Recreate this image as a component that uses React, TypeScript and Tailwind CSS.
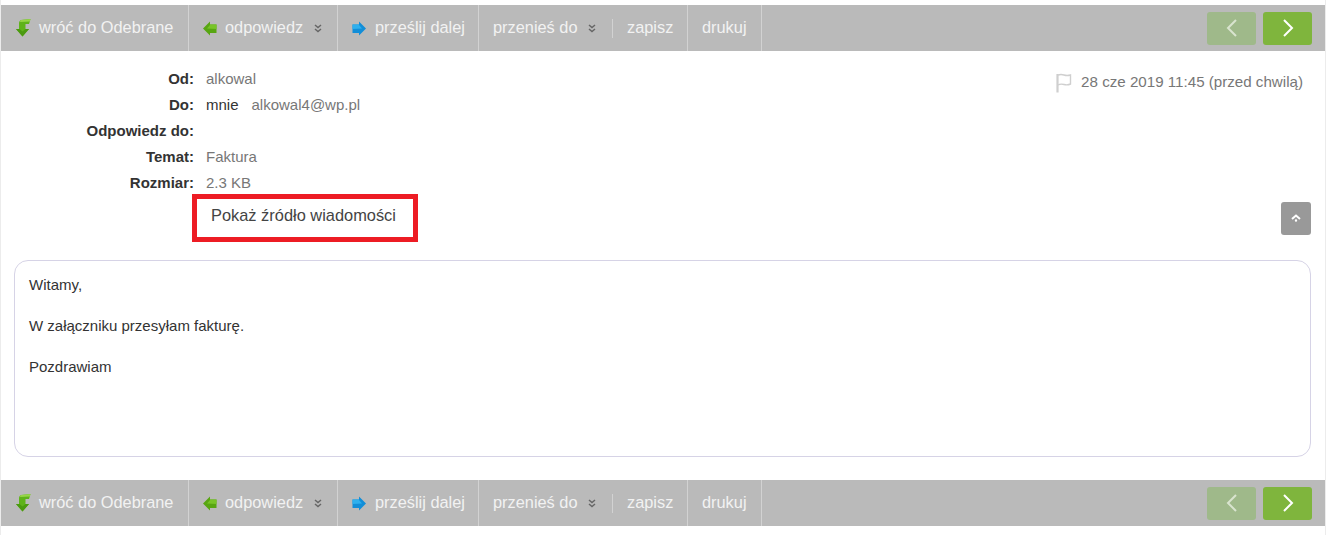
import React from 'react';

const BackIcon = () => (
  <svg width="16" height="18" viewBox="0 0 16 18" className="shrink-0">
    <path d="M6 1 L15.5 0 L14 5 H10.5 V10 H14 L7.5 17.5 L1 10 H4 V4 Q4 2 6 1 Z" fill="#5fb31a" />
    <path d="M7.5 17.5 L1 10 H4.5 L7.5 12.5 L10.5 10 H14 Z" fill="#4b9a10" />
    <path d="M6 1 L15.5 0 L14.8 2.5 L5 3 Q5 1.6 6 1 Z" fill="#96d648" />
  </svg>
);

const ReplyIcon = () => (
  <svg width="14" height="15" viewBox="0 0 14 15" className="shrink-0">
    <path d="M7 0.5 V3.5 H13.5 V12 H7 V14.5 L0 7.5 Z" fill="#58a612" />
    <path d="M7 3.5 H13.5 V8 L4 7.5 L7 4 Z" fill="#78c428" />
  </svg>
);

const ForwardIcon = () => (
  <svg width="14" height="15" viewBox="0 0 14 15" className="shrink-0">
    <path d="M7 0.5 V3.5 H0.5 V12 H7 V14.5 L14 7.5 Z" fill="#128ed8" />
    <path d="M7 3.5 H0.5 V8 L10 7.5 L7 4 Z" fill="#2eb0ee" />
  </svg>
);

const Chevrons = () => (
  <svg width="8" height="9" viewBox="0 0 8 9" fill="none" stroke="#666666" strokeWidth="1.5" className="shrink-0">
    <path d="M1 1 L4 3.5 L7 1" />
    <path d="M1 5 L4 7.5 L7 5" />
  </svg>
);

const Item = ({ label, icon, menu, width, textGap = 'mr-[8px]', pad = 'pl-[14px]' }: { label: string; icon?: React.ReactNode; menu?: boolean; width: string; textGap?: string; pad?: string }) => (
  <div className={`flex h-full items-center border-r border-[#d2d2d2] ${pad} ${width}`}>
    {icon && <span className={`${textGap} flex w-[15px] justify-center`}>{icon}</span>}
    <span className="-mt-[2px]">{label}</span>
    {menu && <span className="ml-[11px] flex"><Chevrons /></span>}
  </div>
);

const Toolbar = () => (
  <div className="flex h-[46px] items-center justify-between bg-[#bababa] pr-[13px] text-[16.35px] text-[#f2f2f2]">
    <div className="flex h-full items-center">
      <Item label="wróć do Odebrane" icon={<BackIcon />} textGap="mr-[9px]" width="w-[188px]" />
      <Item label="odpowiedz" icon={<ReplyIcon />} pad="pl-[13px]" menu width="w-[149px]" />
      <Item label="prześlij dalej" icon={<ForwardIcon />} pad="pl-[13px]" textGap="mr-[9px]" width="w-[141px]" />
      <div className="flex h-full w-[134px] items-center pl-[14px]">
        <span className="-mt-[2px]">przenieś do</span>
        <span className="ml-[10px] flex"><Chevrons /></span>
        <span className="ml-auto h-[19px] w-px bg-[#d2d2d2]" />
      </div>
      <Item label="zapisz" pad="pl-[14px]" width="w-[75px]" />
      <Item label="drukuj" width="w-[74px]" />
    </div>
    <div className="flex gap-[7px]">
      <button className="flex h-[33px] w-[49px] items-center justify-center rounded-[3px] bg-[#9fb98a]">
        <svg width="14" height="20" viewBox="0 0 14 20" fill="none" stroke="#d9e4cf" strokeWidth="2">
          <path d="M11 2 L3 10 L11 18" />
        </svg>
      </button>
      <button className="flex h-[33px] w-[49px] items-center justify-center rounded-[3px] bg-[#7fb53d]">
        <svg width="14" height="20" viewBox="0 0 14 20" fill="none" stroke="#ffffff" strokeWidth="2">
          <path d="M3 2 L11 10 L3 18" />
        </svg>
      </button>
    </div>
  </div>
);

const Row = ({ label, children }: { label: string; children?: React.ReactNode }) => (
  <div className="flex h-[26px] items-center">
    <div className="w-[193px] text-right font-bold text-[#333333]">{label}</div>
    <div className="ml-[12px] flex text-[#777777]">{children}</div>
  </div>
);

export default function App() {
  return (
    <div className="h-[535px] overflow-hidden border-x border-[#ececec] bg-white pt-[5px] font-['Liberation_Sans',Arial,sans-serif] text-[15px]">
      <Toolbar />

      <div className="relative pt-[15px]">
        <Row label="Od:">alkowal</Row>
        <Row label="Do:">
          <span className="mr-[13px] text-[#333333]">mnie</span>
          alkowal4@wp.pl
        </Row>
        <Row label="Odpowiedz do:" />
        <Row label="Temat:">Faktura</Row>
        <Row label="Rozmiar:">2.3 KB</Row>

        {/* flag + date */}
        <div className="absolute top-[20px] right-[22px] flex items-center text-[15.15px] text-[#777777]">
          <svg width="16" height="20" viewBox="0 0 16 20" fill="none" stroke="#cfcfcf" strokeWidth="1.4" className="mt-[2px] mr-[9px]">
            <path d="M1.5 1 V19.5" strokeWidth="2.2" />
            <path d="M2 2 Q5 1 8 2 T14.5 2 V11 Q11.5 12.5 8 11.5 T2 12" />
          </svg>
          <span>28 cze 2019 11:45 (przed chwilą)</span>
        </div>
      </div>

      <div className="-mt-[2px] flex h-[48px] items-center justify-between pr-[14px]">
        <div className="ml-[191px] h-[48px] w-[226px] border-[5px] border-[#ed1c24] pl-[14px] pt-[4px] text-[16.4px] text-[#444444]">
          Pokaż źródło wiadomości
        </div>
        <button className="flex h-[33px] w-[30px] items-center justify-center rounded-[3px] bg-[#999999]">
          <svg width="10" height="8" viewBox="0 0 10 8" fill="none" stroke="#ffffff" strokeWidth="2">
            <path d="M1 5 L5 1.5 L9 5" />
            <circle cx="5" cy="6.5" r="0.6" strokeWidth="1.2" />
          </svg>
        </button>
      </div>

      <div className="mr-[14px] ml-[13px] mt-[18px] h-[197px] rounded-[14px] border-[1.5px] border-[#d6d3e6] px-[14px] pt-[14px] text-[#333333]">
        <p className="h-[41px] leading-[20px]">Witamy,</p>
        <p className="h-[41px] leading-[20px]">W załączniku przesyłam fakturę.</p>
        <p className="leading-[20px]">Pozdrawiam</p>
      </div>

      <div className="mt-[23px]">
        <Toolbar />
      </div>
    </div>
  );
}
